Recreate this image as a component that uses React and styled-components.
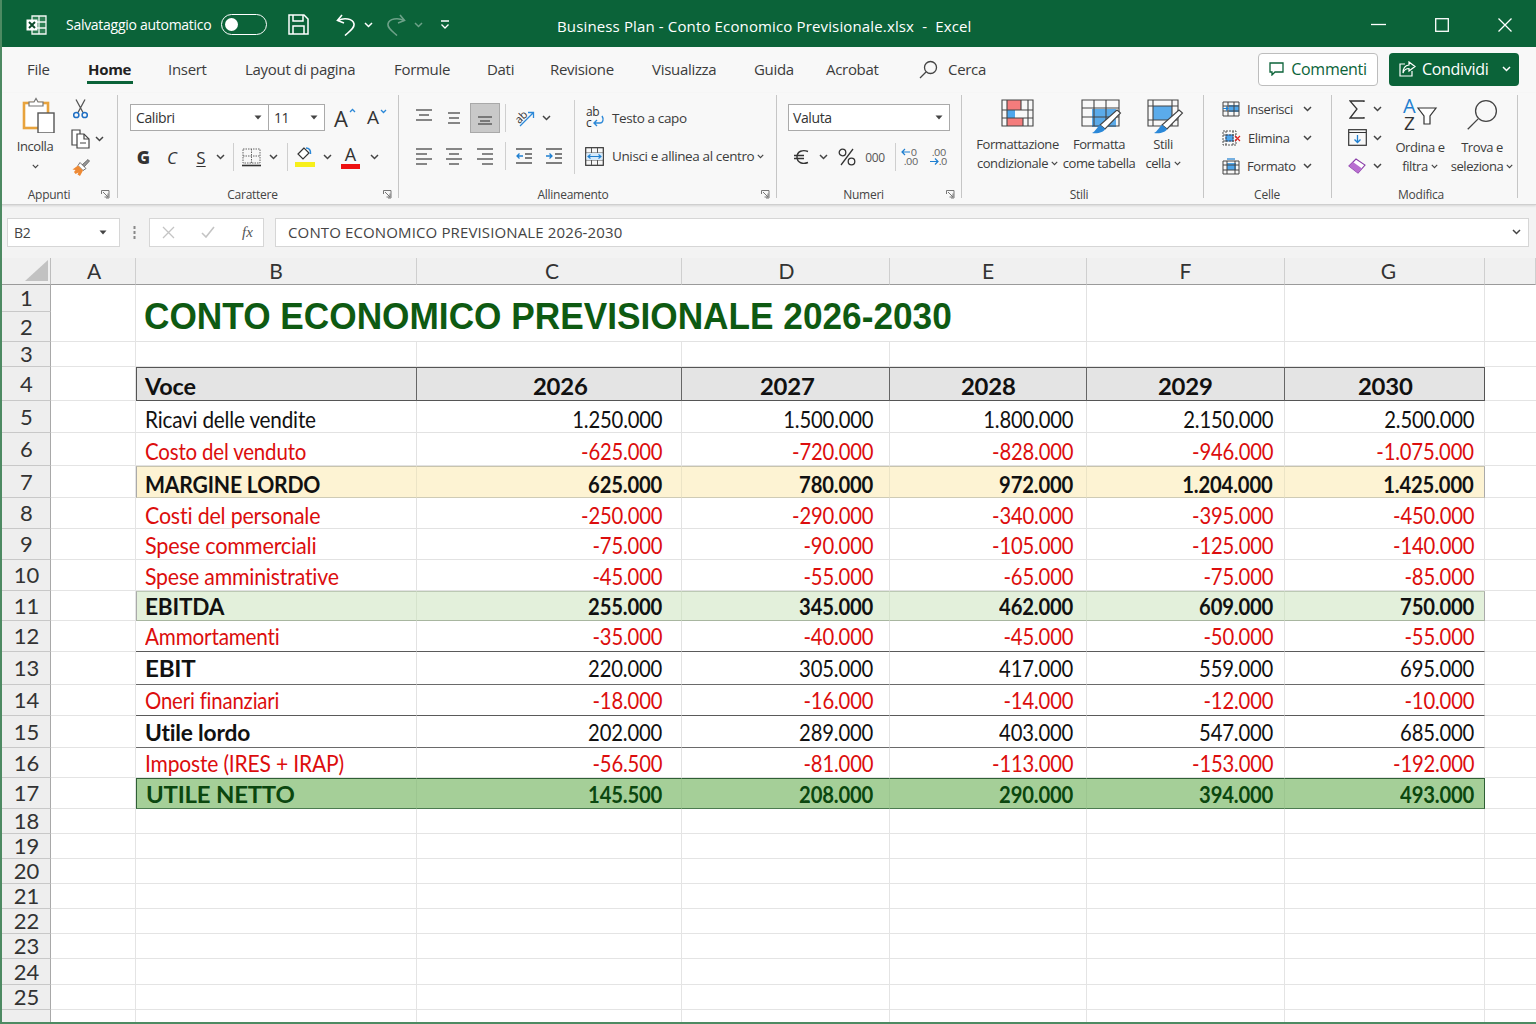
import React from 'react';
import styled, { createGlobalStyle } from 'styled-components';

const GlobalStyle = createGlobalStyle`
  html, body { margin: 0; padding: 0; background: #fff; }
  * { box-sizing: border-box; }
`;

const UI_FONT = '"Open Sans", "Noto Sans", sans-serif';
const SHEET_FONT = 'Lato, "Noto Sans", sans-serif';
const GREEN = '#0b6339';
const INK = '#444';
const BLUE = '#2b88d8';

const Window = styled.div`
  position: relative;
  width: 1536px;
  height: 1024px;
  overflow: hidden;
  display: flex;
  flex-direction: column;
  font-family: ${UI_FONT};
  color: #333;
  background: #fff;
  &::after {
    content: '';
    position: absolute;
    inset: 0;
    border: solid #4d8a62;
    border-width: 0 0 2px 2px;
    pointer-events: none;
    z-index: 2;
  }
`;

/* title bar */
const TitleBar = styled.div`
  height: 47px;
  flex: none;
  display: flex;
  align-items: center;
  background: ${GREEN};
  color: #fff;
  padding-top: 4px;
`;
const TitleLeft = styled.div`
  width: 557px;
  display: flex;
  align-items: center;
  padding: 0 0 2px 26px;
  flex: none;
`;
const AutoSave = styled.span`
  margin-left: 19px;
  font-size: 14px;
  letter-spacing: -0.28px;
  width: 155px;
`;
const Toggle = styled.span`
  position: relative;
  display: block;
  width: 46px;
  height: 21px;
  border: 1.5px solid #fff;
  border-radius: 11px;
  &::after {
    content: '';
    position: absolute;
    left: 3px;
    top: 2.5px;
    width: 13px;
    height: 13px;
    border-radius: 50%;
    background: #fff;
  }
`;
const QatSlot = styled.span`
  display: flex;
  justify-content: center;
  align-items: center;
  width: ${p => p.$w}px;
  margin-left: ${p => p.$ml || 0}px;
  opacity: ${p => (p.$dim ? 0.4 : 1)};
`;
const DocTitle = styled.div`
  font-size: 15px;
  letter-spacing: 0.14px;
  white-space: pre;
`;
const WinControls = styled.div`
  margin-left: auto;
  display: flex;
  align-items: center;
  padding-bottom: 2px;
`;
const WinBtn = styled.span`
  width: 63px;
  display: flex;
  justify-content: center;
`;

/* tabs */
const TabBar = styled.div`
  height: 46px;
  flex: none;
  display: flex;
  align-items: center;
  padding: 0 17px 2px 27px;
  background: #f8f8f8;
`;
const Tab = styled.div`
  position: relative;
  width: ${p => p.$w}px;
  flex: none;
  font-size: 15px;
  letter-spacing: -0.3px;
  font-weight: ${p => (p.$active ? 700 : 400)};
  color: ${p => (p.$active ? '#222' : '#3c3c3c')};
  ${p => p.$active && `
    &::after {
      content: '';
      position: absolute;
      left: -1px;
      top: 22px;
      width: 46px;
      height: 3px;
      background: ${GREEN};
    }
  `}
`;
const Search = styled.div`
  display: flex;
  align-items: center;
  gap: 10px;
  font-size: 15px;
  letter-spacing: -0.3px;
  color: #3c3c3c;
`;
const TabActions = styled.div`
  margin-left: auto;
  display: flex;
  gap: 11px;
`;
const CommentBtn = styled.div`
  width: 120px;
  height: 33px;
  display: flex;
  align-items: center;
  justify-content: center;
  gap: 7px;
  background: #fff;
  border: 1px solid #bdbdbd;
  border-radius: 4px;
  color: ${GREEN};
  font-size: 16px;
  letter-spacing: -0.3px;
`;
const ShareBtn = styled.div`
  width: 130px;
  height: 33px;
  display: flex;
  align-items: center;
  padding-left: 10px;
  gap: 6px;
  background: ${GREEN};
  border-radius: 4px;
  color: #fff;
  font-size: 16px;
  letter-spacing: -0.3px;
  & > :last-child { margin-left: 7px; }
`;

/* ribbon */
const Ribbon = styled.div`
  height: 112px;
  flex: none;
  display: flex;
  background: #f8f8f8;
  border-bottom: 1px solid #cfcfcf;
  box-shadow: 0 1px 2px rgba(0, 0, 0, 0.12);
  position: relative;
  z-index: 1;
`;
const Group = styled.div`
  position: relative;
  width: ${p => p.$w}px;
  flex: none;
  display: flex;
  flex-direction: column;
  &::after {
    content: '';
    position: absolute;
    right: 0;
    top: 2px;
    bottom: 6px;
    width: 1px;
    background: #c6c6c6;
  }
`;
const GroupBody = styled.div`
  flex: 1;
  display: flex;
  align-items: flex-start;
  padding: ${p => p.$pt || 0}px 0 0 ${p => p.$pl || 0}px;
`;
const GroupLabel = styled.div`
  height: 19px;
  flex: none;
  text-align: center;
  font-size: 12px;
  letter-spacing: -0.25px;
  line-height: 16px;
  padding-top: 2px;
  color: #444;
  padding-right: ${p => p.$shift || 0}px;
`;
const Launcher = styled.span`
  position: absolute;
  right: ${p => p.$r || 7}px;
  bottom: 5px;
  display: flex;
`;
const Stack = styled.div`
  display: flex;
  flex-direction: column;
  gap: ${p => p.$gap || 0}px;
  width: ${p => (p.$w ? `${p.$w}px` : 'auto')};
  flex: none;
  margin-left: ${p => p.$ml || 0}px;
`;
const Row = styled.div`
  display: flex;
  align-items: center;
  height: ${p => p.$h}px;
  flex: none;
`;
const Slot = styled.span`
  display: flex;
  align-items: center;
  justify-content: center;
  width: ${p => p.$w}px;
  height: ${p => (p.$pressed ? '30px' : '100%')};
  flex: none;
  margin-left: ${p => p.$ml || 0}px;
  ${p => p.$pressed && `
    background: #c9c9c9;
    border: 1px solid #a9a9a9;
  `}
`;
const BoldG = styled.span`
  font-size: 18px;
  font-weight: 800;
  color: #333;
`;
const ItalicC = styled.span`
  font-size: 17px;
  font-style: italic;
  color: #333;
`;
const UnderS = styled.span`
  font-size: 17px;
  color: #333;
  text-decoration: underline;
  text-underline-offset: 2px;
`;
const FontA = styled.span`
  position: relative;
  display: block;
  font-size: ${p => p.$size}px;
  line-height: 1;
  color: #333;
  & > svg {
    position: absolute;
    top: 1px;
    right: -8px;
  }
`;
const ColorA = styled.span`
  display: flex;
  flex-direction: column;
  align-items: center;
  width: 19px;
  font-size: 18px;
  line-height: 17px;
  color: #333;
  &::after {
    content: '';
    display: block;
    width: 19px;
    height: 5px;
    margin-top: 1px;
    background: #ee1111;
  }
`;
const Thousand = styled.span`
  font-size: 12px;
  letter-spacing: -0.4px;
  color: #555;
`;
const VSep = styled.span`
  display: block;
  width: 1px;
  height: ${p => p.$h || 28}px;
  flex: none;
  margin-left: ${p => p.$ml || 0}px;
  background: #cfcfcf;
`;
const TallSep = styled.span`
  display: block;
  width: 1px;
  height: 74px;
  margin-top: -3px;
  flex: none;
  background: #cfcfcf;
`;
const Combo = styled.div`
  display: flex;
  align-items: center;
  justify-content: space-between;
  width: ${p => p.$w}px;
  height: 27px;
  flex: none;
  padding: 0 6px 0 ${p => p.$pl || 5}px;
  background: #fff;
  border: 1px solid #aaa;
  margin-left: ${p => p.$ml || 0}px;
  font-size: 14px;
  letter-spacing: -0.4px;
  color: #333;
`;
const LabelledRow = styled.div`
  display: flex;
  align-items: center;
  height: ${p => p.$h}px;
  font-size: 13.5px;
  letter-spacing: -0.38px;
  color: #3c3c3c;
  white-space: nowrap;
  & > svg:first-child { margin-right: ${p => p.$gap || 7}px; flex: none; }
  & > svg:last-child:not(:first-child) { margin-left: 3px; width: 7px; height: 5px; }
`;
const BigButton = styled.div`
  width: ${p => p.$w}px;
  flex: none;
  margin-left: ${p => p.$ml || 0}px;
  padding-top: ${p => p.$pt || 0}px;
  display: flex;
  flex-direction: column;
  align-items: center;
  font-size: 13px;
  letter-spacing: -0.42px;
  line-height: 19px;
  color: #3c3c3c;
  text-align: center;
  white-space: nowrap;
`;
const BigIcon = styled.div`
  height: ${p => p.$h}px;
  display: flex;
  align-items: flex-start;
  padding-left: ${p => p.$shift || 0}px;
`;
const LabelLine = styled.span`
  display: flex;
  align-items: center;
  justify-content: center;
  gap: 3px;
  height: ${p => (p.$h ? `${p.$h}px` : 'auto')};
  margin-top: ${p => p.$mt || 0}px;
  & > svg { width: 7px; height: 5px; }
`;
const CellsRow = styled.div`
  display: flex;
  align-items: center;
  width: 90px;
  height: 28.5px;
  font-size: 13px;
  letter-spacing: -0.4px;
  color: #3c3c3c;
  & > span { margin-left: 7px; flex: 1; }
`;

/* formula bar */
const FormulaBar = styled.div`
  height: 53px;
  flex: none;
  display: flex;
  align-items: center;
  padding: 1px 7px 0 7px;
  background: #f3f3f3;
`;
const Field = styled.div`
  display: flex;
  align-items: center;
  height: 29px;
  background: #fff;
  border: 1px solid #d6d6d6;
  font-size: ${p => p.$fs || 14}px;
  color: #444;
`;
const NameBox = styled(Field)`
  width: 113px;
  padding: 0 12px 0 6px;
  justify-content: space-between;
  letter-spacing: -0.3px;
`;
const Dots = styled.span`
  width: 29px;
  display: flex;
  justify-content: center;
`;
const FnBox = styled(Field)`
  width: 115px;
  padding-left: 12px;
`;
const FnSlot = styled.span`
  width: ${p => p.$w}px;
  flex: none;
  display: flex;
  justify-content: flex-start;
`;
const FxLabel = styled.span`
  font-family: "Liberation Serif", serif;
  font-style: italic;
  font-size: 15px;
  color: #555;
`;
const FormulaInput = styled(Field)`
  flex: 1;
  margin-left: 11px;
  padding: 0 7px 0 12px;
  justify-content: space-between;
  font-size: 15px;
  letter-spacing: 0.13px;
`;

/* sheet */
const Sheet = styled.div`
  flex: 1;
  display: grid;
  grid-template-columns: 51px 85px 281px 265px 208px 197px 198px 200px 1fr;
  grid-template-rows: 27px 27px 30px 25px 34px 32px 33px 32px 31px 31px 31px 30px 31px 33px 31px 32px 30px 31px 25px 25px 25px 25px 25px 25px 26px 25px 14px;
  font-family: ${SHEET_FONT};
  background: #fff;
  min-height: 0;
`;
const Corner = styled.div`
  background: #f0f0f0;
  border-right: 1px solid #bdbdbd;
  border-bottom: 1px solid #9a9a9a;
  display: flex;
  align-items: flex-end;
  justify-content: flex-end;
  padding: 0 2px 3px 0;
`;
const ColHead = styled.div`
  background: #f0f0f0;
  border-right: 1px solid #cfcfcf;
  border-bottom: 1px solid #9a9a9a;
  display: flex;
  align-items: center;
  justify-content: center;
  font-size: 21px;
  color: #333;
  padding-bottom: 1px;
  padding-left: ${p => p.$offset || 0}px;
`;
const RowHead = styled.div`
  background: #eeeeee;
  border-right: 1px solid #a8a8a8;
  border-bottom: 1px solid #c8c8c8;
  display: flex;
  align-items: center;
  justify-content: center;
  padding: 0 0 1px 3px;
  font-size: 22px;
  color: #333;
`;
const BORDERS = {
  head: { top: '1.5px solid #555', bottom: '1.5px solid #555', side: '1.5px solid #666' },
  plain: { top: 'none', bottom: '1px solid #e2e2e2', side: '1px solid #e2e2e2' },
  beforeLine: { top: 'none', bottom: '1.5px solid #5a5a5a', side: '1px solid #e2e2e2' },
  line: { top: 'none', bottom: '1.5px solid #6a6a6a', side: '1px solid #e2e2e2' },
  margin: { top: '1px solid #c8c4ae', bottom: '1px solid #cfcbb5', side: '1px solid #ece4c6' },
  ebitda: { top: '1px solid #bcc9b4', bottom: '1px solid #a8b6a0', side: '1px solid #d5e3cc' },
  net: { top: '1.5px solid #2f5f35', bottom: '1px solid #4c7c50', side: '1px solid #9cc690' },
};
const FILLS = { head: '#e4e4e4', margin: '#fdf3d3', ebitda: '#e3f0db', net: '#a5cf98' };
const EDGES = { head: '#555', margin: '#aaa', ebitda: '#aaa', net: '#2f5f35' };
const LABEL_PADS = { head: 8, margin: 8, ebitda: 8, net: 8.5 };
const Cell = styled.div`
  display: flex;
  align-items: center;
  min-width: 0;
  white-space: nowrap;
  padding-top: ${p => p.$dy}px;
  background: ${p => FILLS[p.$kind] || '#fff'};
  border-right: ${p => BORDERS[p.$kind || 'plain'].side};
  border-bottom: ${p => BORDERS[p.$kind || 'plain'].bottom};
  border-top: ${p => BORDERS[p.$kind || 'plain'].top};
  ${p => p.$first && EDGES[p.$kind] && `border-left: 1.5px solid ${EDGES[p.$kind]};`}
  ${p => p.$last && p.$kind === 'head' && 'border-right: 1.5px solid #555;'}
  ${p => p.$last && p.$kind === 'net' && 'border-right: 1.5px solid #2f5f35;'}
  ${p => p.$last && (p.$kind === 'margin' || p.$kind === 'ebitda') && 'border-right: 1px solid #aaa;'}
`;
const LabelCell = styled(Cell)`
  padding-left: ${p => LABEL_PADS[p.$kind] || 9}px;
`;
const NumCell = styled(Cell)`
  justify-content: ${p => (p.$center ? 'center' : 'flex-end')};
  padding-left: ${p => (p.$center ? p.$offset : 0)}px;
  padding-right: ${p => (p.$center ? 0 : p.$pad)}px;
`;
const CellText = styled.span`
  display: inline-block;
  font-size: 23px;
  line-height: 1;
  letter-spacing: -0.2px;
  transform: scaleX(${p => p.$sx || 0.88});
  transform-origin: ${p => (p.$right ? 'right' : p.$center ? 'center' : 'left')} center;
  font-weight: ${p => (p.$bold ? 700 : 400)};
  color: ${p => p.$color};
`;
const TitleCell = styled.div`
  grid-column: span 4;
  grid-row: span 2;
  display: flex;
  align-items: center;
  padding: 8px 0 0 8px;
  border-right: 1px solid #e2e2e2;
  border-bottom: 1px solid #e2e2e2;
  overflow: hidden;
  white-space: nowrap;
`;
const TitleText = styled.span`
  font-family: "Liberation Sans", Arial, sans-serif;
  font-weight: 700;
  font-size: 37px;
  color: #0e5a12;
  display: inline-block;
  transform: scaleX(0.952);
  transform-origin: left center;
`;
const Blank = styled.div`
  border-right: ${p => (p.$edge ? 'none' : '1px solid #e4e4e4')};
  border-bottom: ${p => (p.$open ? 'none' : '1px solid #e4e4e4')};
`;

/* icons */
const Chev = ({ color = INK }) => (
  <svg width="9" height="6" viewBox="0 0 9 6">
    <path d="M1 1l3.500 3.500L8 1" fill="none" stroke={color} strokeWidth="1.500" />
  </svg>
);
const Arrow = () => (
  <svg width="8" height="5" viewBox="0 0 8 5">
    <path d="M0.500 0.500h7L4 4.500z" fill="#444" />
  </svg>
);
const ExcelLogo = () => (
  <svg width="21" height="20" viewBox="0 0 21 20">
    <path d="M6 1h14v18H6z" fill="#2f7f55" stroke="#f2f8f4" strokeWidth="1.300" />
    <path d="M13 1v18M6 7h14M6 13h14" stroke="#f2f8f4" strokeWidth="1.300" />
    <rect x="0.500" y="4.500" width="11" height="11" fill="#fff" />
    <path d="M3 7l6 6M9 7l-6 6" stroke="#0b4a2a" strokeWidth="1.900" />
  </svg>
);
const SaveIcon = () => (
  <svg width="21" height="21" viewBox="0 0 21 21" fill="none" stroke="#fff" strokeWidth="1.500">
    <path d="M1 1h15l4 4v15H1z" />
    <path d="M5 1v6h10V1M5 20v-8h11v8" />
  </svg>
);
const UndoIcon = ({ flip }) => (
  <svg width="20" height="22" viewBox="0 0 20 22" fill="none" stroke="#fff" strokeWidth="1.600">
    <g transform={flip ? 'translate(20 0) scale(-1 1)' : undefined}>
      <path d="M6 1L1.500 6.500 8 9" />
      <path d="M2 6.500c6-3 15-2 16 3.500 .6 4-4 7-9 11.500" />
    </g>
  </svg>
);
const QatIcon = () => (
  <svg width="10" height="10" viewBox="0 0 10 10" fill="none" stroke="#fff" strokeWidth="1.300">
    <path d="M1 1h8M1.500 4.500l3.500 3.500 3.500-3.500" />
  </svg>
);
const MinIcon = () => <svg width="15" height="3" viewBox="0 0 15 3"><path d="M0 1.500h15" stroke="#fff" strokeWidth="1.300" /></svg>;
const MaxIcon = () => <svg width="14" height="14" viewBox="0 0 14 14"><rect x=".7" y=".7" width="12.600" height="12.600" fill="none" stroke="#fff" strokeWidth="1.300" /></svg>;
const CloseIcon = () => <svg width="14" height="14" viewBox="0 0 14 14"><path d="M.5.500l13 13M13.500.500l-13 13" stroke="#fff" strokeWidth="1.300" /></svg>;
const SearchIcon = ({ size = 19, sw = 1.3 }) => (
  <svg width={size} height={size} viewBox="0 0 19 19" fill="none" stroke="#444" strokeWidth={sw}>
    <circle cx="11.500" cy="7.500" r="6" />
    <path d="M7 12L1 18" />
  </svg>
);
const CommentIcon = () => (
  <svg width="15" height="14" viewBox="0 0 15 14" fill="none" stroke={GREEN} strokeWidth="1.300">
    <path d="M1 1h13v9H6l-3 3v-3H1z" />
  </svg>
);
const ShareIcon = () => (
  <svg width="17" height="16" viewBox="0 0 17 16" fill="none" stroke="#fff" strokeWidth="1.200">
    <path d="M6 3H1v12h12v-5" />
    <path d="M10 1l6 4.500-6 4.500V7.500C7 7.500 5 9 4 12c0-5 2-7.500 6-8z" />
  </svg>
);
const PasteIcon = () => (
  <svg width="33" height="36" viewBox="0 0 33 36">
    <rect x="2" y="6" width="24" height="25" fill="#fff" stroke="#e8a33d" strokeWidth="2.600" />
    <path d="M7 9V5h5l2-3.500L16 5h5v4z" fill="#fff" stroke="#777" strokeWidth="1.200" />
    <rect x="16" y="16" width="16" height="20" fill="#fff" stroke="#555" strokeWidth="1.400" />
  </svg>
);
const CutIcon = () => (
  <svg width="15" height="20" viewBox="0 0 15 20" fill="none">
    <path d="M3 .5l7 13M12 .5l-7 13" stroke="#555" strokeWidth="1.300" />
    <circle cx="3.300" cy="16" r="2.600" stroke="#1f6fc4" strokeWidth="1.500" />
    <circle cx="11.700" cy="16" r="2.600" stroke="#1f6fc4" strokeWidth="1.500" />
  </svg>
);
const CopyIcon = () => (
  <svg width="19" height="20" viewBox="0 0 19 20" fill="#fff" stroke="#444" strokeWidth="1.200">
    <path d="M1 1h8v15H1z" />
    <path d="M6 5h7l5 5v9H6z" />
    <path d="M13 5v5h5M9 14h6" fill="none" />
  </svg>
);
const BrushIcon = () => (
  <svg width="19" height="18" viewBox="0 0 19 18">
    <path d="M11 6l6-5.500 1.500 1.500L13 8z" fill="#999" stroke="#555" strokeWidth=".8" />
    <path d="M9 3.500l6 6-3 2-5-5z" fill="#fff" stroke="#555" strokeWidth=".8" />
    <path d="M7 6.500l5 5-3 5.500-2.500-1.500 1-2-3 1.500-1.500-2 1.500-2-3-.5z" fill="#ee8a35" />
  </svg>
);
const Caret = ({ up }) => (
  <svg width="7" height="5" viewBox="0 0 7 5">
    <path d={up ? 'M1 4l2.500-2.500L6 4' : 'M1 1l2.500 2.500L6 1'} fill="none" stroke={BLUE} strokeWidth="1.300" />
  </svg>
);
const BorderIcon = () => (
  <svg width="19" height="19" viewBox="0 0 19 19" fill="none">
    <path d="M1 1h17v14H1zM9.500 1v14M1 8h17" stroke="#666" strokeWidth="1" strokeDasharray="1.500 1" />
    <path d="M0 17.500h19" stroke="#333" strokeWidth="1.600" />
  </svg>
);
const FillIcon = () => (
  <svg width="20" height="22" viewBox="0 0 20 22">
    <path d="M9 2L3 8l5 5 6-6z" fill="#fff" stroke="#333" strokeWidth="1.200" />
    <path d="M11 2c3 0 5 2 4.500 6" fill="none" stroke={BLUE} strokeWidth="1.500" />
    <rect x="0" y="16" width="20" height="5" fill="#f7ef1b" />
  </svg>
);
const Lines = ({ lines }) => (
  <svg width="18" height="20" viewBox="0 0 18 20">
    {lines.map(([y, x1, x2]) => <path key={y} d={`M${x1} ${y}H${x2}`} stroke="#555" strokeWidth="1.400" />)}
  </svg>
);
const V_TOP = [[2, 1, 17], [7, 4, 14], [12, 1, 17]];
const V_MID = [[5, 3, 15], [10, 4, 14], [15, 3, 15]];
const V_BOT = [[9, 2, 16], [13, 4, 14], [16, 2, 16]];
const H_LEFT = [[3, 1, 17], [8, 1, 12], [13, 1, 17], [18, 1, 12]];
const H_CENTER = [[3, 1, 17], [8, 4, 14], [13, 1, 17], [18, 4, 14]];
const H_RIGHT = [[3, 1, 17], [8, 6, 17], [13, 1, 17], [18, 6, 17]];
const OrientIcon = () => (
  <svg width="22" height="20" viewBox="0 0 22 20" overflow="visible">
    <text x="2" y="14" fontFamily="Open Sans, sans-serif" fontSize="11" fill="#333" transform="rotate(-45 7 10)">ab</text>
    <path d="M7 18L20 5M15 4.500h5.500V10" fill="none" stroke={BLUE} strokeWidth="1.300" />
  </svg>
);
const IndentIcon = ({ out }) => (
  <svg width="18" height="18" viewBox="0 0 18 18" fill="none">
    <path d="M1 2h16M1 16h16M10 7h7M10 11h7" stroke="#555" strokeWidth="1.300" />
    <path d={out ? 'M8 9H2M4.500 6.500L2 9l2.500 2.500' : 'M1 9h6M4.500 6.500L7 9l-2.500 2.500'} stroke="#1f7fd0" strokeWidth="1.300" />
  </svg>
);
const WrapIcon = () => (
  <svg width="20" height="24" viewBox="0 0 20 24" overflow="visible">
    <text x="1" y="10" fontFamily="Open Sans, sans-serif" fontSize="12" fill="#333">ab</text>
    <text x="1" y="21" fontFamily="Open Sans, sans-serif" fontSize="12" fill="#333">c</text>
    <path d="M17 10c2 3 1 7-2 7H9M12 14l-3 3 3 3" fill="none" stroke={BLUE} strokeWidth="1.400" />
  </svg>
);
const MergeIcon = () => (
  <svg width="19" height="19" viewBox="0 0 19 19" fill="none">
    <rect x=".7" y=".7" width="17.600" height="17.600" stroke="#333" strokeWidth="1.200" />
    <path d="M1 6h17M1 13h17M6.500 1v5M12.500 1v5M6.500 13v5M12.500 13v5" stroke="#555" strokeWidth="1" />
    <rect x="1.500" y="6" width="16" height="7" fill="#d6eafa" />
    <path d="M3 9.500h13M5.500 7.500l-2.500 2 2.500 2M13.500 7.500l2.500 2-2.500 2" stroke="#1f7fd0" strokeWidth="1.100" />
  </svg>
);
const EuroIcon = () => (
  <svg width="16" height="16" viewBox="0 0 16 16" fill="none" stroke="#333" strokeWidth="1.400">
    <path d="M15 2.500C10 .5 4 2 4 8s6 7.500 11 5.500M1 6.500h10M1 9.500h10" />
  </svg>
);
const PercentIcon = () => (
  <svg width="18" height="18" viewBox="0 0 18 18" fill="none" stroke="#333" strokeWidth="1.300">
    <circle cx="4.500" cy="4.500" r="3.300" />
    <circle cx="13.500" cy="13.500" r="3.300" />
    <path d="M15 1L3 17" />
  </svg>
);
const DecIcon = ({ more }) => (
  <svg width="18" height="20" viewBox="0 0 18 20" overflow="visible">
    <text x={more ? 10 : 3} y="8.500" fontFamily="Lato, sans-serif" fontSize="10" fill="#666">{more ? '0' : '.00'}</text>
    <text x={more ? 3 : 10} y="18" fontFamily="Lato, sans-serif" fontSize="10" fill="#666">{more ? '.00' : '.0'}</text>
    <path d={more ? 'M9 5H1M4 2L1 5l3 3' : 'M1 14.500h8M6 11.500l3 3-3 3'} fill="none" stroke="#1f7fd0" strokeWidth="1.200" />
  </svg>
);
const CondFormatIcon = () => (
  <svg width="33" height="28" viewBox="0 0 33 28" fill="none">
    <rect x="6" y="1" width="14" height="10" fill="#f47c7c" />
    <rect x="6" y="11" width="8" height="8" fill="#4ea6ec" />
    <rect x="6" y="19" width="16" height="8" fill="#f47c7c" />
    <path d="M1 1h31v26H1zM6 1v26M20 1v10M22 19v8M27 1v26M1 11h31M1 19h31" stroke="#444" strokeWidth="1.100" />
  </svg>
);
const Brush = ({ dx = 0, dy = 0 }) => (
  <g transform={`translate(${dx} ${dy})`}>
    <path d="M36 11l3.500 3L24 30l-5-4z" fill="#fff" stroke="#444" strokeWidth="1.100" />
    <path d="M19 26l5 4c-1 3-7 5-13 4 4-2 5-6 8-8z" fill="#2b88d8" />
  </g>
);
const TableFormatIcon = () => (
  <svg width="41" height="35" viewBox="0 0 41 35" fill="none">
    <rect x="11" y="10" width="24" height="18" fill="#3f9de8" opacity=".85" />
    <path d="M1 1h37v26H1zM13 1v26M25 1v26M1 9h37M1 18h37" stroke="#444" strokeWidth="1.100" />
    <Brush />
  </svg>
);
const CellStyleIcon = () => (
  <svg width="37" height="35" viewBox="0 0 37 35" fill="none">
    <rect x="6" y="7" width="19" height="14" fill="#3f9de8" opacity=".85" />
    <path d="M1 1h30v26H1zM6 1v26M25 1v26M1 7h30M1 21h30" stroke="#444" strokeWidth="1.100" />
    <Brush dx={-4} />
  </svg>
);
const InsertCells = () => (
  <svg width="18" height="16" viewBox="0 0 18 16" fill="none">
    <rect x="7" y="4" width="10" height="7" fill="#4ea6ec" />
    <path d="M1 1h16v14H1zM1 5h16M1 10h16M6 1v14M12 1v14" stroke="#444" strokeWidth="1" />
    <path d="M1 7.500h5M4 5.500l2 2-2 2" stroke="#1f7fd0" strokeWidth="1.100" />
  </svg>
);
const DeleteCells = () => (
  <svg width="19" height="16" viewBox="0 0 19 16" fill="none">
    <rect x="4" y="5" width="7" height="6" fill="#4ea6ec" stroke="#1f6fc4" />
    <path d="M1 1h13v14H1zM1 5h13M1 11h13M4 1v14M11 1v14" stroke="#555" strokeWidth="1" strokeDasharray="2 1" />
    <path d="M13 6l5 5M18 6l-5 5" stroke="#e02020" strokeWidth="1.200" />
  </svg>
);
const FormatCells = () => (
  <svg width="18" height="17" viewBox="0 0 18 17" fill="none">
    <rect x="5" y="5" width="9" height="7" fill="#4ea6ec" />
    <path d="M1 3h16v13H1zM1 7h16M1 12h16M5 3v13M13 3v13" stroke="#444" strokeWidth="1" />
    <path d="M5 1h8" stroke="#1f7fd0" strokeWidth="1.200" />
  </svg>
);
const SumIcon = () => (
  <svg width="16" height="19" viewBox="0 0 16 19" fill="none" stroke="#333" strokeWidth="1.300">
    <path d="M15 2V1H1l7 8-7 9h14v-1" />
  </svg>
);
const FillDownIcon = () => (
  <svg width="19" height="17" viewBox="0 0 19 17" fill="none">
    <rect x=".7" y=".7" width="17.600" height="15.600" stroke="#333" strokeWidth="1.200" />
    <path d="M1 3.500h17" stroke="#333" />
    <path d="M9.500 6v7M6.500 10.500l3 3 3-3" stroke="#1f7fd0" strokeWidth="1.300" />
  </svg>
);
const EraserIcon = () => (
  <svg width="18" height="16" viewBox="0 0 18 16">
    <path d="M1 8l7-7 9 6-7 8z" fill="#fff" stroke="#8a3fa8" strokeWidth="1.100" />
    <path d="M1 8l4-4 9 6.500L10 15z" fill="#b86fd0" />
  </svg>
);
const SortIcon = () => (
  <svg width="34" height="33" viewBox="0 0 34 33" overflow="visible">
    <text x="0" y="15" fontFamily="Open Sans, sans-serif" fontSize="20" fill="#1f7fd0">A</text>
    <text x="1" y="32" fontFamily="Open Sans, sans-serif" fontSize="19" fill="#333">Z</text>
    <path d="M15 10h18l-6 8v8h-6v-8z" fill="#fff" stroke="#333" strokeWidth="1.200" />
  </svg>
);
const LauncherIcon = () => (
  <svg width="9" height="9" viewBox="0 0 9 9" fill="none" stroke="#777" strokeWidth="1">
    <path d="M.5 4V.5H8V8H5M2 2l5 5M7 3.500V7H3.500" />
  </svg>
);
const TriangleIcon = () => (
  <svg width="23" height="21" viewBox="0 0 23 21"><path d="M0 21L23 0v21z" fill="#c2c2c2" /></svg>
);
const ColonDots = () => (
  <svg width="3" height="13" viewBox="0 0 3 13"><path d="M1.500 0v3M1.500 5v3M1.500 10v3" stroke="#888" strokeWidth="2" /></svg>
);
const CancelIcon = () => <svg width="13" height="13" viewBox="0 0 13 13"><path d="M1 1l11 11M12 1L1 12" stroke="#c4c4c4" strokeWidth="1.300" /></svg>;
const EnterIcon = () => <svg width="14" height="12" viewBox="0 0 14 12"><path d="M1 7l4 4 8-10" fill="none" stroke="#c4c4c4" strokeWidth="1.600" /></svg>;

const TABS = [
  ['File', 61], ['Home', 80, true], ['Insert', 77], ['Layout di pagina', 149], ['Formule', 93],
  ['Dati', 63], ['Revisione', 102], ['Visualizza', 102], ['Guida', 72], ['Acrobat', 93],
];
const COLUMNS = ['A', 'B', 'C', 'D', 'E', 'F', 'G'];
const COL_OFFSETS = [2, 0, 6, 2, 0, 0, 8];
const RED = '#dc0d0d';
const NUM_PADS = [19, 16, 13, 11, 10];
const HEAD_OFFSETS = [22, 4, 1, 0, 2];

const TABLE = [
  { n: 4, dy: 4, kind: 'head', bold: true, sx: 1.02, label: 'Voce', values: ['2026', '2027', '2028', '2029', '2030'] },
  { n: 5, dy: 5, sx: 0.9, label: 'Ricavi delle vendite', values: ['1.250.000', '1.500.000', '1.800.000', '2.150.000', '2.500.000'] },
  { n: 6, dy: 4, red: true, sx: 0.89, label: 'Costo del venduto', values: ['-625.000', '-720.000', '-828.000', '-946.000', '-1.075.000'] },
  { n: 7, dy: 4, kind: 'margin', bold: true, sx: 0.92, label: 'MARGINE LORDO', values: ['625.000', '780.000', '972.000', '1.204.000', '1.425.000'] },
  { n: 8, dy: 4, red: true, sx: 0.93, label: 'Costi del personale', values: ['-250.000', '-290.000', '-340.000', '-395.000', '-450.000'] },
  { n: 9, dy: 3, red: true, sx: 0.94, label: 'Spese commerciali', values: ['-75.000', '-90.000', '-105.000', '-125.000', '-140.000'] },
  { n: 10, dy: 3, red: true, sx: 0.925, label: 'Spese amministrative', values: ['-45.000', '-55.000', '-65.000', '-75.000', '-85.000'] },
  { n: 11, dy: 1, kind: 'ebitda', bold: true, sx: 0.98, label: 'EBITDA', values: ['255.000', '345.000', '462.000', '609.000', '750.000'] },
  { n: 12, dy: 1, red: true, rule: 'beforeLine', sx: 0.9, label: 'Ammortamenti', values: ['-35.000', '-40.000', '-45.000', '-50.000', '-55.000'] },
  { n: 13, dy: 1, rule: 'line', labelBold: true, sx: 1.05, label: 'EBIT', values: ['220.000', '305.000', '417.000', '559.000', '695.000'] },
  { n: 14, dy: 1, red: true, rule: 'beforeLine', sx: 0.885, label: 'Oneri finanziari', values: ['-18.000', '-16.000', '-14.000', '-12.000', '-10.000'] },
  { n: 15, dy: 1, rule: 'line', labelBold: true, sx: 0.99, label: 'Utile lordo', values: ['202.000', '289.000', '403.000', '547.000', '685.000'] },
  { n: 16, dy: 1, red: true, sx: 0.915, label: 'Imposte (IRES + IRAP)', values: ['-56.500', '-81.000', '-113.000', '-153.000', '-192.000'] },
  { n: 17, dy: 1, kind: 'net', bold: true, sx: 1.04, label: 'UTILE NETTO', values: ['145.500', '208.000', '290.000', '394.000', '493.000'] },
];

const textColor = row => (row.red ? RED : row.kind === 'net' ? '#0b470f' : '#111');

const EmptyRow = ({ n }) => (
  <>
    <RowHead>{n}</RowHead>
    {COLUMNS.map(c => <Blank key={c} />)}
    <Blank $edge />
  </>
);

const TableRow = ({ row }) => {
  const kind = row.kind || row.rule;
  const isHead = row.kind === 'head';
  return (
    <>
      <RowHead>{row.n}</RowHead>
      <Blank />
      <LabelCell $kind={kind} $dy={row.dy} $first>
        <CellText $sx={row.sx} $bold={row.bold || row.labelBold} $color={textColor(row)}>{row.label}</CellText>
      </LabelCell>
      {row.values.map((v, i) => (
        <NumCell
          key={i}
          $kind={kind}
          $dy={row.dy}
          $last={i === 4}
          $center={isHead}
          $offset={HEAD_OFFSETS[i]}
          $pad={NUM_PADS[i]}
        >
          <CellText $sx={isHead ? 1.04 : 0.88} $bold={row.bold} $right={!isHead} $center={isHead} $color={textColor(row)}>{v}</CellText>
        </NumCell>
      ))}
      <Blank $edge />
    </>
  );
};

const App = () => (
  <Window>
    <GlobalStyle />
    <TitleBar>
      <TitleLeft>
        <ExcelLogo />
        <AutoSave>Salvataggio automatico</AutoSave>
        <Toggle />
        <QatSlot $w={22} $ml={20}><SaveIcon /></QatSlot>
        <QatSlot $w={22} $ml={26}><UndoIcon /></QatSlot>
        <QatSlot $w={10} $ml={6}><Chev color="#fff" /></QatSlot>
        <QatSlot $w={22} $ml={12} $dim><UndoIcon flip /></QatSlot>
        <QatSlot $w={10} $ml={6} $dim><Chev color="#fff" /></QatSlot>
        <QatSlot $w={10} $ml={17}><QatIcon /></QatSlot>
      </TitleLeft>
      <DocTitle>{'Business Plan - Conto Economico Previsionale.xlsx  -  Excel'}</DocTitle>
      <WinControls>
        <WinBtn><MinIcon /></WinBtn>
        <WinBtn><MaxIcon /></WinBtn>
        <WinBtn><CloseIcon /></WinBtn>
      </WinControls>
    </TitleBar>

    <TabBar>
      {TABS.map(([name, w, active]) => <Tab key={name} $w={w} $active={active}>{name}</Tab>)}
      <Search><SearchIcon />Cerca</Search>
      <TabActions>
        <CommentBtn><CommentIcon />Commenti</CommentBtn>
        <ShareBtn><ShareIcon />Condividi<Chev color="#fff" /></ShareBtn>
      </TabActions>
    </TabBar>

    <Ribbon>
      <Group $w={118}>
        <GroupBody $pt={1} $pl={15}>
          <BigButton $w={40} $pt={3}>
            <BigIcon $h={39} $shift={6}><PasteIcon /></BigIcon>
            <LabelLine $mt={1}>Incolla</LabelLine>
            <LabelLine $h={20}><Chev /></LabelLine>
          </BigButton>
          <Stack $ml={15}>
            <Row $h={30}><Slot $w={20}><CutIcon /></Slot></Row>
            <Row $h={29}><Slot $w={20}><CopyIcon /></Slot><Slot $w={14} $ml={2}><Chev /></Slot></Row>
            <Row $h={29}><Slot $w={20}><BrushIcon /></Slot></Row>
          </Stack>
        </GroupBody>
        <GroupLabel $shift={20}>Appunti</GroupLabel>
        <Launcher $r={8}><LauncherIcon /></Launcher>
      </Group>

      <Group $w={281}>
        <GroupBody $pt={11} $pl={12}>
          <Stack $gap={13}>
            <Row $h={27}>
              <Combo $w={139}>Calibri<Arrow /></Combo>
              <Combo $w={57} $ml={-1}>11<Arrow /></Combo>
              <Slot $w={24} $ml={4}><FontA $size={22}>A<Caret up /></FontA></Slot>
              <Slot $w={24} $ml={8}><FontA $size={19}>A<Caret /></FontA></Slot>
            </Row>
            <Row $h={26}>
              <Slot $w={27}><BoldG>G</BoldG></Slot>
              <Slot $w={30}><ItalicC>C</ItalicC></Slot>
              <Slot $w={28}><UnderS>S</UnderS></Slot>
              <Slot $w={10}><Chev /></Slot>
              <VSep $ml={8} />
              <Slot $w={34}><BorderIcon /></Slot>
              <Slot $w={10}><Chev /></Slot>
              <VSep $ml={9} />
              <Slot $w={34}><FillIcon /></Slot>
              <Slot $w={10}><Chev /></Slot>
              <Slot $w={37}><ColorA>A</ColorA></Slot>
              <Slot $w={10}><Chev /></Slot>
            </Row>
          </Stack>
        </GroupBody>
        <GroupLabel $shift={12}>Carattere</GroupLabel>
        <Launcher><LauncherIcon /></Launcher>
      </Group>

      <Group $w={378}>
        <GroupBody $pt={10} $pl={10}>
          <Stack $gap={9} $w={165}>
            <Row $h={30}>
              <Slot $w={30}><Lines lines={V_TOP} /></Slot>
              <Slot $w={30}><Lines lines={V_MID} /></Slot>
              <Slot $w={30} $ml={1} $pressed><Lines lines={V_BOT} /></Slot>
              <VSep $ml={5} />
              <Slot $w={30} $ml={3}><OrientIcon /></Slot>
              <Slot $w={10} $ml={2}><Chev /></Slot>
            </Row>
            <Row $h={28}>
              <Slot $w={30}><Lines lines={H_LEFT} /></Slot>
              <Slot $w={30}><Lines lines={H_CENTER} /></Slot>
              <Slot $w={30} $ml={1}><Lines lines={H_RIGHT} /></Slot>
              <VSep $ml={5} />
              <Slot $w={30} $ml={3}><IndentIcon out /></Slot>
              <Slot $w={30}><IndentIcon /></Slot>
            </Row>
          </Stack>
          <TallSep />
          <Stack $gap={9} $ml={10}>
            <LabelledRow $h={30}><WrapIcon />Testo a capo</LabelledRow>
            <LabelledRow $h={28} $gap={8}><MergeIcon />Unisci e allinea al centro<Chev /></LabelledRow>
          </Stack>
        </GroupBody>
        <GroupLabel $shift={30}>Allineamento</GroupLabel>
        <Launcher $r={7}><LauncherIcon /></Launcher>
      </Group>

      <Group $w={185}>
        <GroupBody $pt={11} $pl={11}>
          <Stack $gap={13}>
            <Row $h={27}><Combo $w={162} $pl={4}>Valuta<Arrow /></Combo></Row>
            <Row $h={26}>
              <Slot $w={26}><EuroIcon /></Slot>
              <Slot $w={18}><Chev /></Slot>
              <Slot $w={30}><PercentIcon /></Slot>
              <Slot $w={26}><Thousand>000</Thousand></Slot>
              <VSep $ml={7} />
              <Slot $w={28}><DecIcon more /></Slot>
              <Slot $w={28}><DecIcon /></Slot>
            </Row>
          </Stack>
        </GroupBody>
        <GroupLabel $shift={12}>Numeri</GroupLabel>
        <Launcher $r={7}><LauncherIcon /></Launcher>
      </Group>

      <Group $w={242}>
        <GroupBody $pt={6} $pl={13}>
          <BigButton $w={85}>
            <BigIcon $h={36}><CondFormatIcon /></BigIcon>
            <LabelLine>Formattazione</LabelLine>
            <LabelLine>condizionale<Chev /></LabelLine>
          </BigButton>
          <BigButton $w={78}>
            <BigIcon $h={36} $shift={5}><TableFormatIcon /></BigIcon>
            <LabelLine>Formatta</LabelLine>
            <LabelLine>come tabella</LabelLine>
          </BigButton>
          <BigButton $w={50}>
            <BigIcon $h={36} $shift={4}><CellStyleIcon /></BigIcon>
            <LabelLine>Stili</LabelLine>
            <LabelLine>cella<Chev /></LabelLine>
          </BigButton>
        </GroupBody>
        <GroupLabel $shift={8}>Stili</GroupLabel>
      </Group>

      <Group $w={128}>
        <GroupBody $pt={2} $pl={18}>
          <Stack>
            <CellsRow><InsertCells /><span>Inserisci</span><Chev /></CellsRow>
            <CellsRow><DeleteCells /><span>Elimina</span><Chev /></CellsRow>
            <CellsRow><FormatCells /><span>Formato</span><Chev /></CellsRow>
          </Stack>
        </GroupBody>
        <GroupLabel $shift={2}>Celle</GroupLabel>
      </Group>

      <Group $w={186}>
        <GroupBody $pt={2} $pl={10}>
          <Stack>
            <Row $h={28}><Slot $w={30}><SumIcon /></Slot><Slot $w={10}><Chev /></Slot></Row>
            <Row $h={29}><Slot $w={30}><FillDownIcon /></Slot><Slot $w={10}><Chev /></Slot></Row>
            <Row $h={27}><Slot $w={30}><EraserIcon /></Slot><Slot $w={10}><Chev /></Slot></Row>
          </Stack>
          <BigButton $w={56} $ml={10} $pt={3}>
            <BigIcon $h={40}><SortIcon /></BigIcon>
            <LabelLine>Ordina e</LabelLine>
            <LabelLine>filtra<Chev /></LabelLine>
          </BigButton>
          <BigButton $w={60} $ml={4} $pt={3}>
            <BigIcon $h={40}><SearchIcon size={33} sw={0.75} /></BigIcon>
            <LabelLine>Trova e</LabelLine>
            <LabelLine>seleziona<Chev /></LabelLine>
          </BigButton>
        </GroupBody>
        <GroupLabel $shift={8}>Modifica</GroupLabel>
      </Group>
    </Ribbon>

    <FormulaBar>
      <NameBox>B2<Arrow /></NameBox>
      <Dots><ColonDots /></Dots>
      <FnBox>
        <FnSlot $w={39}><CancelIcon /></FnSlot>
        <FnSlot $w={41}><EnterIcon /></FnSlot>
        <FnSlot $w={20}><FxLabel>fx</FxLabel></FnSlot>
      </FnBox>
      <FormulaInput>CONTO ECONOMICO PREVISIONALE 2026-2030<Chev /></FormulaInput>
    </FormulaBar>

    <Sheet>
      <Corner><TriangleIcon /></Corner>
      {COLUMNS.map((c, i) => <ColHead key={c} $offset={COL_OFFSETS[i]}>{c}</ColHead>)}
      <ColHead />

      <RowHead>1</RowHead>
      <Blank $open />
      <TitleCell><TitleText>CONTO ECONOMICO PREVISIONALE 2026-2030</TitleText></TitleCell>
      <Blank $open /><Blank $open /><Blank $edge $open />
      <RowHead>2</RowHead>
      <Blank />
      <Blank /><Blank /><Blank $edge />
      <EmptyRow n={3} />

      {TABLE.map(row => <TableRow key={row.n} row={row} />)}

      {[18, 19, 20, 21, 22, 23, 24, 25, ''].map(n => <EmptyRow key={n} n={n} />)}
    </Sheet>
  </Window>
);

export default App;
